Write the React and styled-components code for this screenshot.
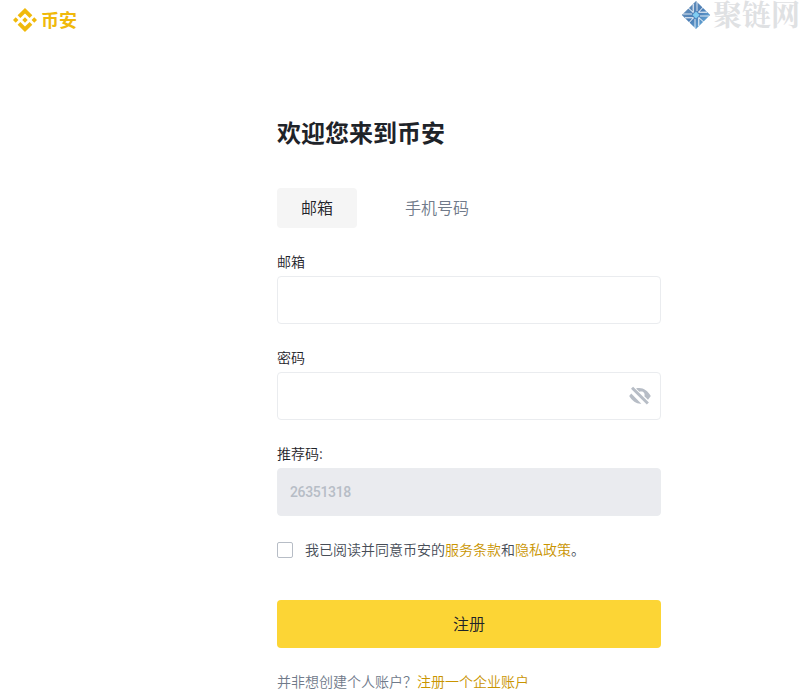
import React from 'react';
import styled, { createGlobalStyle } from 'styled-components';

const GlobalStyle = createGlobalStyle`
  * { box-sizing: border-box; }
  body {
    margin: 0;
    background: #fff;
    color: #1e2329;
    font-family: "Noto Sans CJK SC", sans-serif;
    overflow: hidden;
  }
`;

const Page = styled.div`
  height: 698px;
  overflow: hidden;
`;

const Header = styled.header`
  display: flex;
  justify-content: space-between;
  height: 40px;
  padding-left: 12px;
`;

const Brand = styled.div`
  display: flex;
  align-items: center;
  gap: 4px;
  color: #f0b90b;
  font-size: 18px;
  font-weight: 700;
  line-height: 38px;
`;

const BrandName = styled.span`
  height: 40px;
`;

const PartnerMark = styled.div`
  display: flex;
  gap: 2px;
  width: 120px;
  height: 40px;
  white-space: nowrap;
  color: #dfe1e3;
  font-family: "Noto Serif CJK SC", "Noto Sans CJK SC", serif;
  font-size: 29px;
  font-weight: 700;
  line-height: 28px;

  svg { flex: none; margin-top: 1px; }
`;

const Form = styled.form`
  width: 384px;
  margin: 76px 0 0 277px;
`;

const Title = styled.h1`
  margin: 0;
  font-size: 24px;
  font-weight: 700;
  line-height: 32px;
`;

const Tabs = styled.div`
  display: flex;
  gap: 24px;
  margin: 40px 0 24px;
`;

const Tab = styled.button`
  height: 40px;
  padding: 0 24px 1px;
  border: 0;
  border-radius: 4px;
  background: ${({ $active }) => ($active ? '#f5f5f5' : 'transparent')};
  color: ${({ $active }) => ($active ? '#1e2329' : '#707a8a')};
  font: 350 16px/39px "Noto Sans CJK SC", sans-serif;
`;

const Field = styled.div`
  display: flex;
  flex-direction: column;
  gap: 4px;
  margin-bottom: 24px;
`;

const Label = styled.label`
  height: 20px;
  font-size: 14px;
  font-weight: 350;
  line-height: 18px;
`;

const InputBox = styled.div`
  display: flex;
  align-items: center;
  height: 48px;
  padding: 0 8px 0 12px;
  border: 1px solid #eaecef;
  border-radius: 4px;
  background: ${({ $filled }) => ($filled ? '#eaebef' : '#fff')};
`;

const Input = styled.input`
  flex: 1;
  min-width: 0;
  padding: 0;
  border: 0;
  outline: 0;
  background: transparent;
  color: #b7bdc6;
  font: 500 14px/22px Roboto, sans-serif;
  letter-spacing: -0.35px;
`;

const Agreement = styled.label`
  display: flex;
  gap: 12px;
  height: 20px;
  color: #474d57;
  font-size: 14px;
  font-weight: 350;
  line-height: 18px;
`;

const Checkbox = styled.span`
  flex: none;
  width: 16px;
  height: 16px;
  margin-top: 2px;
  border: 1px solid #b7bdc6;
  border-radius: 2px;
`;

const Link = styled.a`
  color: #c99400;
`;

const Submit = styled.button`
  display: block;
  width: 100%;
  height: 48px;
  margin-top: 40px;
  padding: 0 0 1px;
  border: 0;
  border-radius: 4px;
  background: #fcd535;
  color: #1e2329;
  font: 350 16px/47px "Noto Sans CJK SC", sans-serif;
`;

const Footnote = styled.p`
  margin: 24px 0 0;
  color: #707a8a;
  font-size: 14px;
  font-weight: 350;
  line-height: 18px;
  white-space: nowrap;
`;

function BrandIcon() {
  return (
    <svg width="25" height="24" viewBox="-1 0 25 24" fill="#f0b90b">
      <path d="M16.624 13.92l2.718 2.716-7.353 7.353-7.353-7.352 2.717-2.717 4.636 4.66zm4.637-4.636L24 12l-2.715 2.716L18.568 12zM11.989 9.285l2.716 2.691-2.716 2.718L9.272 12zM2.716 9.284L5.41 12l-2.692 2.692L0 12zM11.989.012l7.353 7.329-2.718 2.715-4.635-4.636-4.636 4.66-2.717-2.716z" />
    </svg>
  );
}

function PartnerIcon() {
  const blades = [0, 90, 180, 270];
  return (
    <svg width="30" height="28" viewBox="0 0 30 28">
      <defs>
        <linearGradient id="blade" x1="0" y1="0" x2="1" y2="1">
          <stop offset="0" stopColor="#7499bd" />
          <stop offset=".5" stopColor="#4b7eb6" />
          <stop offset="1" stopColor="#72bce8" />
        </linearGradient>
      </defs>
      <path d="M15 0l14.2 14L15 28 .8 14z" fill="url(#blade)" />
      <g transform="translate(15 14)" fill="none" stroke="#fff">
        {blades.map((angle) => (
          <g key={angle} transform={`rotate(${angle})`}>
            <path d="M-8.5-7.8L-2.8-2.5V-11" strokeWidth="1" />
            <path d="M1-13v9" strokeWidth=".8" />
          </g>
        ))}
      </g>
      <path d="M15 10.5l3.5 3.5-3.5 3.5-3.5-3.5z" fill="#80cdf2" />
    </svg>
  );
}

function EyeOffIcon() {
  return (
    <svg width="24" height="24" viewBox="0 0 24 24" fill="#b7bdc6">
      <path d="M5.1 2.7L20.9 18.5l-2.1 2.1L3 4.8z" />
      <path d="M3.2 9.6L13.3 19.7C8.8 20.2 4.4 17.2 1.2 12z" />
      <path d="M8 4.5C14 2.7 19.3 6 22.8 12l-2.8 3.8-3.6-3.6C17.4 9 15 6.6 11.4 7.7z" />
    </svg>
  );
}

export default function App() {
  return (
    <Page>
      <GlobalStyle />
      <Header>
        <Brand><BrandIcon /><BrandName>币安</BrandName></Brand>
        <PartnerMark><PartnerIcon /><span>聚链网</span></PartnerMark>
      </Header>
      <Form>
        <Title>欢迎您来到币安</Title>
        <Tabs>
          <Tab type="button" $active>邮箱</Tab>
          <Tab type="button">手机号码</Tab>
        </Tabs>
        <Field>
          <Label htmlFor="email">邮箱</Label>
          <InputBox><Input id="email" /></InputBox>
        </Field>
        <Field>
          <Label htmlFor="password">密码</Label>
          <InputBox><Input id="password" type="password" /><EyeOffIcon /></InputBox>
        </Field>
        <Field>
          <Label htmlFor="referral">推荐码:</Label>
          <InputBox $filled><Input id="referral" value="26351318" readOnly /></InputBox>
        </Field>
        <Agreement>
          <Checkbox />
          <span>我已阅读并同意币安的<Link>服务条款</Link>和<Link>隐私政策</Link>。</span>
        </Agreement>
        <Submit type="button">注册</Submit>
        <Footnote>并非想创建个人账户？<Link>注册一个企业账户</Link></Footnote>
      </Form>
    </Page>
  );
}
